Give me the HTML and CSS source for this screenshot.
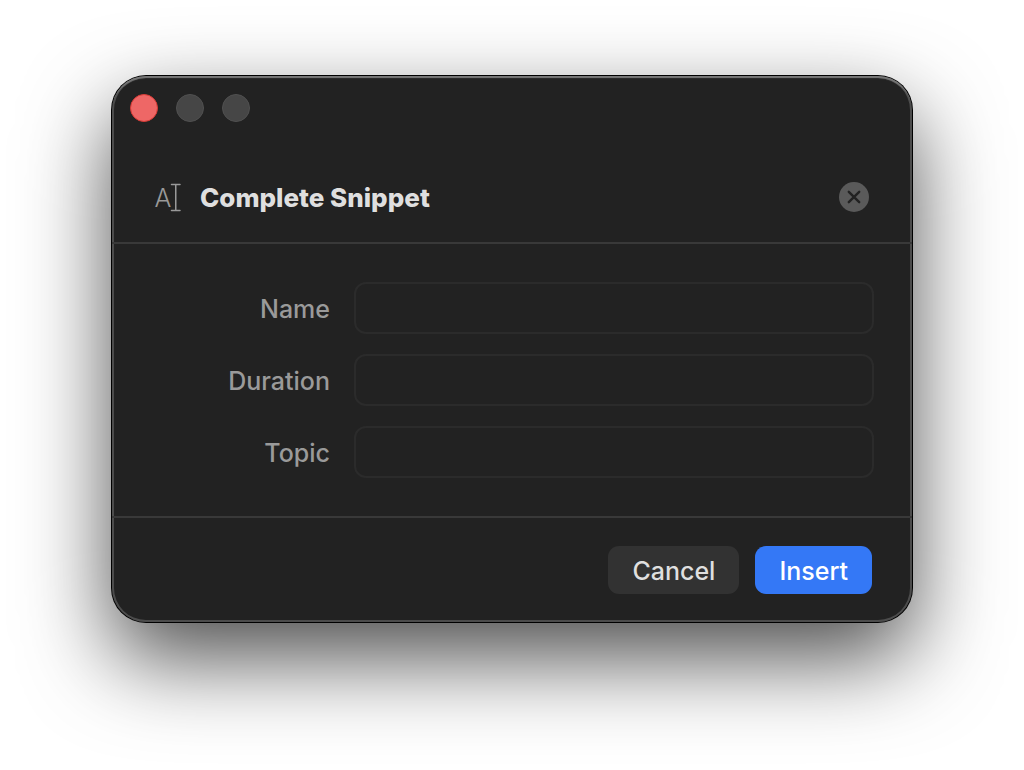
FILE: index.html
```html
<!DOCTYPE html>
<html lang="en">
<head>
<meta charset="utf-8">
<meta name="viewport" content="width=device-width, initial-scale=1">
<title>Complete Snippet</title>
<link rel="stylesheet" href="styles.css">
</head>
<body>
<main class="window">
  <div class="titlebar">
    <button class="light light-close" type="button" aria-label="Close window"></button>
    <button class="light" type="button" aria-label="Minimize window" disabled></button>
    <button class="light" type="button" aria-label="Zoom window" disabled></button>
  </div>
  <header class="header">
    <svg class="snippet-icon" width="28" height="30" viewBox="0 0 28 30" aria-hidden="true">
      <text class="icon-letter" x="0.5" y="25">A</text>
      <path d="M17.5 2.5H26M17.5 28.5H26M21.75 2.5V28.5" fill="none" stroke="currentColor" stroke-width="1.5" stroke-linecap="round"/>
    </svg>
    <h1 class="title">Complete Snippet</h1>
    <button class="dismiss" type="button" aria-label="Dismiss">
      <svg width="30" height="30" viewBox="0 0 30 30" aria-hidden="true">
        <path d="M9.8 9.8L20.2 20.2M20.2 9.8L9.8 20.2" fill="none" stroke="currentColor" stroke-width="2.4" stroke-linecap="round"/>
      </svg>
    </button>
  </header>
  <form class="form">
    <div class="fields">
      <label class="label" for="name">Name</label>
      <input class="field" id="name" type="text">
      <label class="label" for="duration">Duration</label>
      <input class="field" id="duration" type="text">
      <label class="label" for="topic">Topic</label>
      <input class="field" id="topic" type="text">
    </div>
    <footer class="footer">
      <button class="button" type="button">Cancel</button>
      <button class="button button-primary" type="submit">Insert</button>
    </footer>
  </form>
</main>
</body>
</html>
```
FILE: styles.css
```css
* {
  box-sizing: border-box;
}

body {
  min-height: 100vh;
  margin: 0;
  padding: 76px 112px 100px;
  background: #fff;
  color: #dfdfdf;
  font-family: Inter, "Liberation Sans", sans-serif;
  font-size: 25px;
  font-weight: 500;
  line-height: 32px;
}

.window {
  border-radius: 34px;
  background: #222;
  box-shadow:
    inset 0 3px 1px -1px #777,
    inset 0 0 0 2px #4c4c4c,
    0 0 0 1px #000,
    0 36px 88px rgba(0, 0, 0, 0.7);
}

.titlebar {
  display: flex;
  gap: 18px;
  padding: 18px 18px 0;
}

.light {
  width: 28px;
  height: 28px;
  padding: 0;
  border: 1px solid #505050;
  border-radius: 50%;
  background: #464646;
}

.light-close {
  border-color: #d93a35;
  background: #ee6766;
}

.header {
  display: flex;
  align-items: center;
  gap: 18px;
  padding: 58px 43px 28px 42px;
  border-bottom: 2px solid #393939;
}

.snippet-icon {
  color: #999;
}

.icon-letter {
  fill: currentColor;
  font-size: 25px;
  font-weight: 300;
}

.title {
  flex: 1;
  margin: 0;
  padding-top: 2px;
  font-size: 26px;
  font-weight: 800;
}

.dismiss {
  display: flex;
  padding: 0;
  border: 0;
  border-radius: 50%;
  background: #5a5a5a;
  color: #222;
}

.fields {
  display: grid;
  grid-template-columns: 9fr 26fr;
  gap: 20px 24px;
  align-items: center;
  padding: 38px;
  border-bottom: 2px solid #393939;
}

.label {
  padding-top: 2px;
  color: #9a9a9a;
  text-align: right;
}

.field {
  width: 100%;
  height: 52px;
  padding: 0 12px;
  border: 2px solid #2b2b2b;
  border-radius: 12px;
  background: #222;
  color: inherit;
  font: inherit;
}

.footer {
  display: flex;
  justify-content: flex-end;
  gap: 16px;
  padding: 28px 40px;
}

.button {
  padding: 9px 24px 7px;
  border: 0;
  border-radius: 11px;
  background: #323232;
  color: inherit;
  font: inherit;
}

.button-primary {
  background: #3478f6;
  color: #fff;
}
```
